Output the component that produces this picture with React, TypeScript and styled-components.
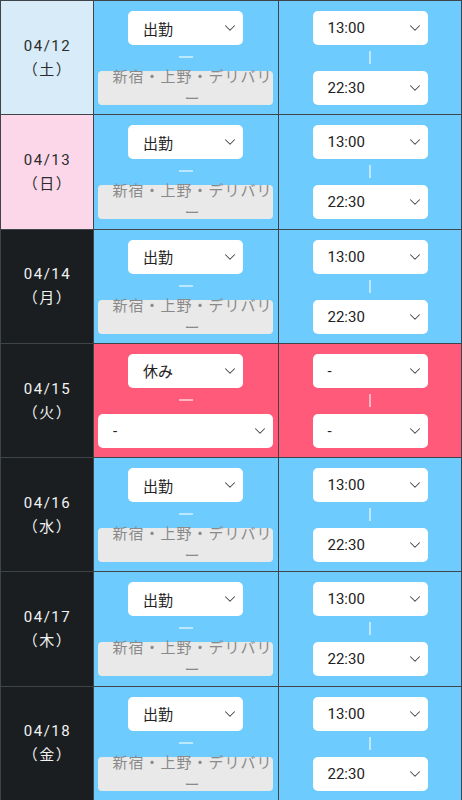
import React from "react";
import styled, { createGlobalStyle, css } from "styled-components";
import { ChevronDown } from "lucide-react";

const Global = createGlobalStyle`
  html, body { margin: 0; padding: 0; background: #1b1e20; }
  body { font-family: Roboto, "Noto Sans CJK JP", sans-serif; }
  * { box-sizing: border-box; }
`;

type Tone = "light" | "pink" | "dark";
type Status = "work" | "off";

const Table = styled.div`
  width: 462px;
  display: grid;
  grid-template-columns: 92px 184px 1fr;
  grid-auto-rows: 113.3px;
  gap: 1px;
  padding: 1px 1px 0 1px;
  background: #3e4448;
`;

const toneBg: Record<Tone, string> = {
  light: "#d7ebf8",
  pink: "#fcd7ea",
  dark: "#1b1e20",
};

const DateCell = styled.div<{ $tone: Tone }>`
  background: ${(p) => toneBg[p.$tone]};
  color: ${(p) => (p.$tone === "dark" ? "#f2f2f2" : "#2b2b2b")};
  display: flex;
  flex-direction: column;
  align-items: center;
  justify-content: center;
  font-size: 15px;
  line-height: 24px;
  letter-spacing: 1.5px;
  padding-left: 1px;
`;

const Cell = styled.div<{ $status: Status }>`
  background: ${(p) => (p.$status === "off" ? "#ff5a79" : "#6dcbfe")};
  display: flex;
  flex-direction: column;
  align-items: center;
  padding: 10px 0 0;
`;

const PlaceCell = styled(Cell)`
  padding-left: 4px;
  padding-right: 5px;
`;

const Dropdown = styled.div<{ $wide?: boolean }>`
  width: ${(p) => (p.$wide ? "100%" : "115px")};
  height: 34px;
  background: #ffffff;
  border-radius: 5px;
  display: flex;
  align-items: center;
  justify-content: space-between;
  padding: 0 4px 0 15px;
  font-size: 15px;
  color: #222;
  flex-shrink: 0;
  svg { color: #444; flex-shrink: 0; }
`;

const Connector = styled.div<{ $dir: "h" | "v" }>`
  flex-shrink: 0;
  display: flex;
  align-items: center;
  justify-content: center;
  height: 26px;
  &::before {
    content: "";
    display: block;
    background: rgba(255, 255, 255, 0.55);
    ${(p) =>
      p.$dir === "h"
        ? css`
            width: 14px;
            height: 2px;
            margin-top: -2px;
          `
        : css`
            width: 2px;
            height: 13px;
            margin-top: -1px;
          `}
  }
`;

const PlaceBox = styled.div`
  width: 100%;
  height: 34px;
  flex-shrink: 0;
  background: #e9e9e9;
  border-radius: 4px;
  display: flex;
  align-items: center;
  justify-content: center;
  padding: 0 0 0 14px;
  font-size: 15px;
  line-height: 22px;
  letter-spacing: 1px;
  color: #8a8a8a;
  text-align: center;
  overflow: visible;
`;

const PlaceText = styled.span`
  display: block;
  width: 100%;
`;

const Select: React.FC<{ value: string; wide?: boolean }> = ({ value, wide }) => (
  <Dropdown $wide={wide}>
    <span>{value}</span>
    <ChevronDown size={18} strokeWidth={1.4} />
  </Dropdown>
);

type Row = { date: string; day: string; tone: Tone; status: Status };

const rows: Row[] = [
  { date: "04/12", day: "（土）", tone: "light", status: "work" },
  { date: "04/13", day: "（日）", tone: "pink", status: "work" },
  { date: "04/14", day: "（月）", tone: "dark", status: "work" },
  { date: "04/15", day: "（火）", tone: "dark", status: "off" },
  { date: "04/16", day: "（水）", tone: "dark", status: "work" },
  { date: "04/17", day: "（木）", tone: "dark", status: "work" },
  { date: "04/18", day: "（金）", tone: "dark", status: "work" },
];

export default function App() {
  return (
    <>
      <Global />
      <Table>
        {rows.map((r) => {
          const off = r.status === "off";
          return (
            <React.Fragment key={r.date}>
              <DateCell $tone={r.tone}>
                <span>{r.date}</span>
                <span>{r.day}</span>
              </DateCell>
              <PlaceCell $status={r.status}>
                <Select value={off ? "休み" : "出勤"} />
                <Connector $dir="h" />
                {off ? (
                  <Select value="-" wide />
                ) : (
                  <PlaceBox>
                    <PlaceText>新宿・上野・デリバリー</PlaceText>
                  </PlaceBox>
                )}
              </PlaceCell>
              <Cell $status={r.status}>
                <Select value={off ? "-" : "13:00"} />
                <Connector $dir="v" />
                <Select value={off ? "-" : "22:30"} />
              </Cell>
            </React.Fragment>
          );
        })}
      </Table>
    </>
  );
}
